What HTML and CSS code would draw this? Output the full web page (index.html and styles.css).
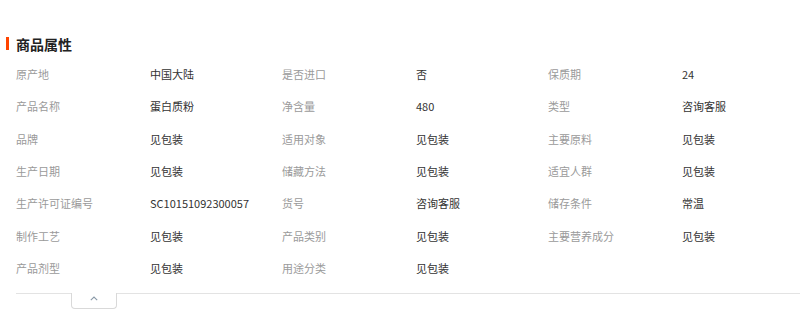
FILE: index.html
```html
<!DOCTYPE html>
<html lang="zh-CN">
<head>
<meta charset="utf-8">
<link rel="stylesheet" href="styles.css">
</head>
<body>
<div class="section">
  <h2 class="title">商品属性</h2>
  <div class="attrs">
    <span class="k">原产地</span><span class="v">中国大陆</span>
    <span class="k">是否进口</span><span class="v">否</span>
    <span class="k">保质期</span><span class="v">24</span>
    <span class="k">产品名称</span><span class="v">蛋白质粉</span>
    <span class="k">净含量</span><span class="v">480</span>
    <span class="k">类型</span><span class="v">咨询客服</span>
    <span class="k">品牌</span><span class="v">见包装</span>
    <span class="k">适用对象</span><span class="v">见包装</span>
    <span class="k">主要原料</span><span class="v">见包装</span>
    <span class="k">生产日期</span><span class="v">见包装</span>
    <span class="k">储藏方法</span><span class="v">见包装</span>
    <span class="k">适宜人群</span><span class="v">见包装</span>
    <span class="k">生产许可证编号</span><span class="v">SC10151092300057</span>
    <span class="k">货号</span><span class="v">咨询客服</span>
    <span class="k">储存条件</span><span class="v">常温</span>
    <span class="k">制作工艺</span><span class="v">见包装</span>
    <span class="k">产品类别</span><span class="v">见包装</span>
    <span class="k">主要营养成分</span><span class="v">见包装</span>
    <span class="k">产品剂型</span><span class="v">见包装</span>
    <span class="k">用途分类</span><span class="v">见包装</span>
  </div>
  <div class="foot">
    <div class="toggle" role="button" aria-label="收起">
      <svg width="8" height="5" viewBox="0 0 8 5"><path d="M0.8 4.2 L4 1 L7.2 4.2" fill="none" stroke="#8a9aa8" stroke-width="1.1"/></svg>
    </div>
  </div>
</div>
</body>
</html>
```
FILE: styles.css
```css
html, body {
  margin: 0;
  padding: 0;
  background: #fff;
}
body {
  font-family: "Noto Sans CJK SC", "Noto Sans", sans-serif;
  font-size: 11px;
  color: #333;
}
.section {
  padding: 35px 0 21px 16px;
}
.title {
  position: relative;
  margin: 0;
  font-size: 14px;
  font-weight: bold;
  color: #222;
  line-height: 18px;
}
.title::before {
  content: "";
  position: absolute;
  left: -10px;
  top: 2px;
  width: 3px;
  height: 13px;
  background: #ff4400;
}
.attrs {
  display: grid;
  grid-template-columns: 134px 132px 134px 132px 134px 1fr;
  grid-auto-rows: 32.33px;
  margin-top: 5px;
  line-height: 32px;
}
.k {
  color: #9a9a9a;
  white-space: nowrap;
}
.v {
  color: #333;
  white-space: nowrap;
}
.foot {
  margin-top: 9px;
  height: 1px;
  background: #e3e3e3;
  position: relative;
}
.toggle {
  position: absolute;
  left: 55px;
  top: 0;
  width: 46px;
  height: 16px;
  background: #fff;
  border: 1px solid #d9d9d9;
  border-top: none;
  border-radius: 0 0 4px 4px;
  display: flex;
  justify-content: center;
  padding-top: 3px;
  box-sizing: border-box;
}
.toggle svg {
  display: block;
}
```
